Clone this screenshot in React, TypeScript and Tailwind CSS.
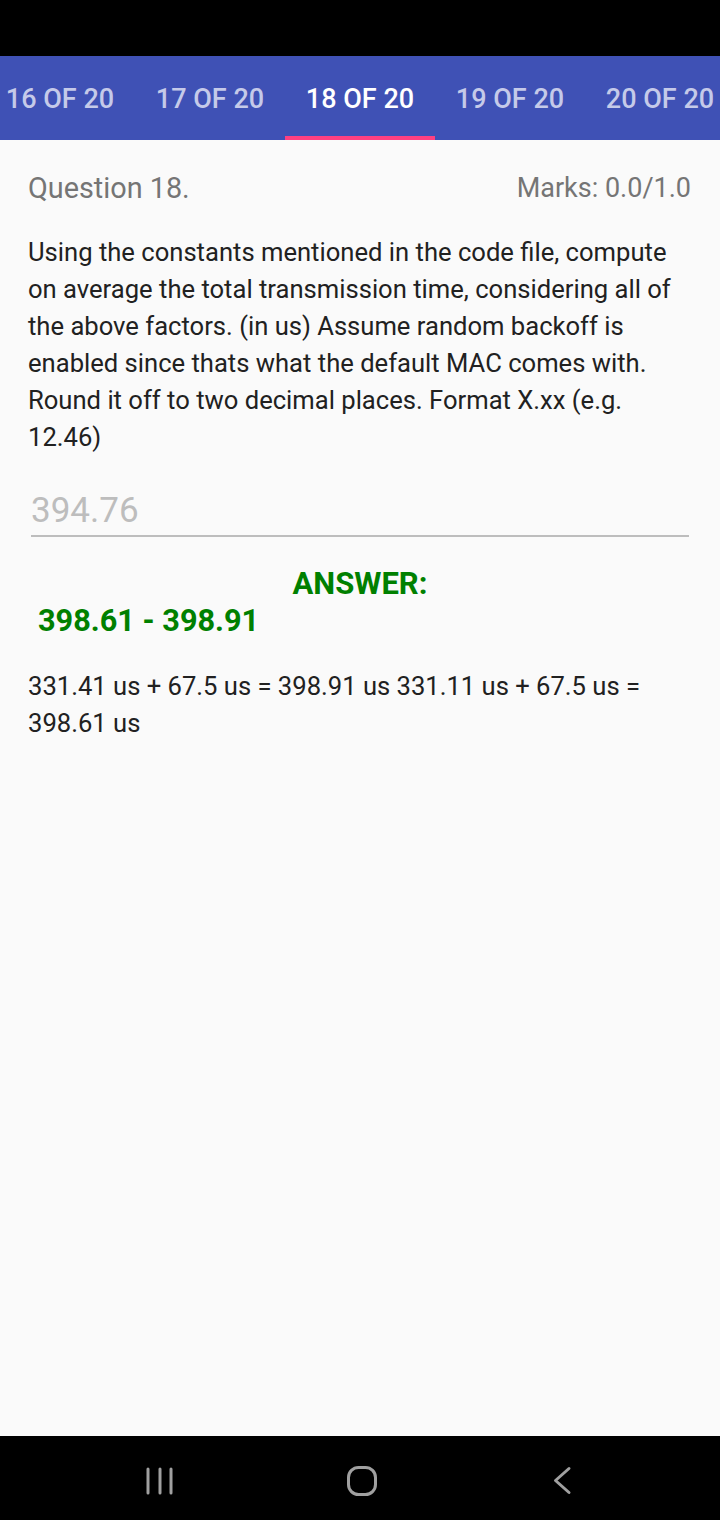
import React from "react";

const tabs = ["16 OF 20", "17 OF 20", "18 OF 20", "19 OF 20", "20 OF 20"];

export default function App() {
  return (
    <div
      className="w-[720px] h-[1520px] flex flex-col bg-[#fafafa] overflow-hidden"
      style={{ fontFamily: "Roboto, 'Noto Sans', sans-serif" }}
    >
      <div className="h-[56px] bg-black shrink-0" />
      <div className="h-[84px] bg-[#3f51b5] shrink-0 flex ml-[-15px]">
        {tabs.map((t, i) => (
          <div key={t} className="w-[150px] shrink-0 flex flex-col">
            <div
              className={`flex-1 flex items-center justify-center text-[27px] font-medium pt-[7px] ${
                i === 2 ? "text-white" : "text-[#c5cae9]"
              }`}
            >
              {t}
            </div>
            <div className={`h-[4px] ${i === 2 ? "bg-[#ff4081]" : ""}`} />
          </div>
        ))}
      </div>
      <div className="flex-1 flex flex-col px-[28px]">
        <div className="flex justify-between items-center mt-[31px] text-[#757575] leading-[34px]">
          <span className="text-[28.8px]">Question 18.</span>
          <span className="text-[27px] mr-[1px]">Marks: 0.0/1.0</span>
        </div>
        <p className="mt-[29px] text-[25.6px] leading-[37px] text-[#212121]">
          Using the constants mentioned in the code file, compute on average the total transmission time, considering all of the above factors. (in us) Assume random backoff is enabled since thats what the default MAC comes with. Round it off to two decimal places. Format X.xx (e.g. 12.46)
        </p>
        <div className="mt-[35px] mx-[3px] border-b-2 border-[#bdbdbd] pb-[4px] text-[35px] leading-[40px] text-[#bdbdbd]">
          394.76
        </div>
        <div className="mt-[28px] text-center text-[31px] font-bold text-[#008000] leading-[37px]">
          ANSWER:
        </div>
        <div className="ml-[10px] text-[30.7px] font-bold text-[#008000] leading-[37px]">
          398.61 - 398.91
        </div>
        <p className="mt-[29px] text-[25.6px] leading-[37px] text-[#212121]">
          331.41 us + 67.5 us = 398.91 us 331.11 us + 67.5 us = 398.61 us
        </p>
      </div>
      <div className="h-[84px] bg-black shrink-0 flex items-center justify-between pl-[140px] pr-[137px]">
        <svg width="40" height="40" viewBox="0 0 40 40">
          <g stroke="#a0a0a0" strokeWidth="3" strokeLinecap="round">
            <line x1="8" y1="11" x2="8" y2="35" />
            <line x1="20" y1="11" x2="20" y2="35" />
            <line x1="31" y1="11" x2="31" y2="35" />
          </g>
        </svg>
        <svg width="40" height="40" viewBox="0 0 40 40">
          <rect x="6.5" y="9.5" width="27" height="27" rx="10" fill="none" stroke="#a0a0a0" strokeWidth="3" />
        </svg>
        <svg width="40" height="40" viewBox="0 0 40 40">
          <polyline points="26,10.5 12.5,22.5 26,34.5" fill="none" stroke="#a0a0a0" strokeWidth="3" strokeLinecap="round" strokeLinejoin="round" />
        </svg>
      </div>
    </div>
  );
}
